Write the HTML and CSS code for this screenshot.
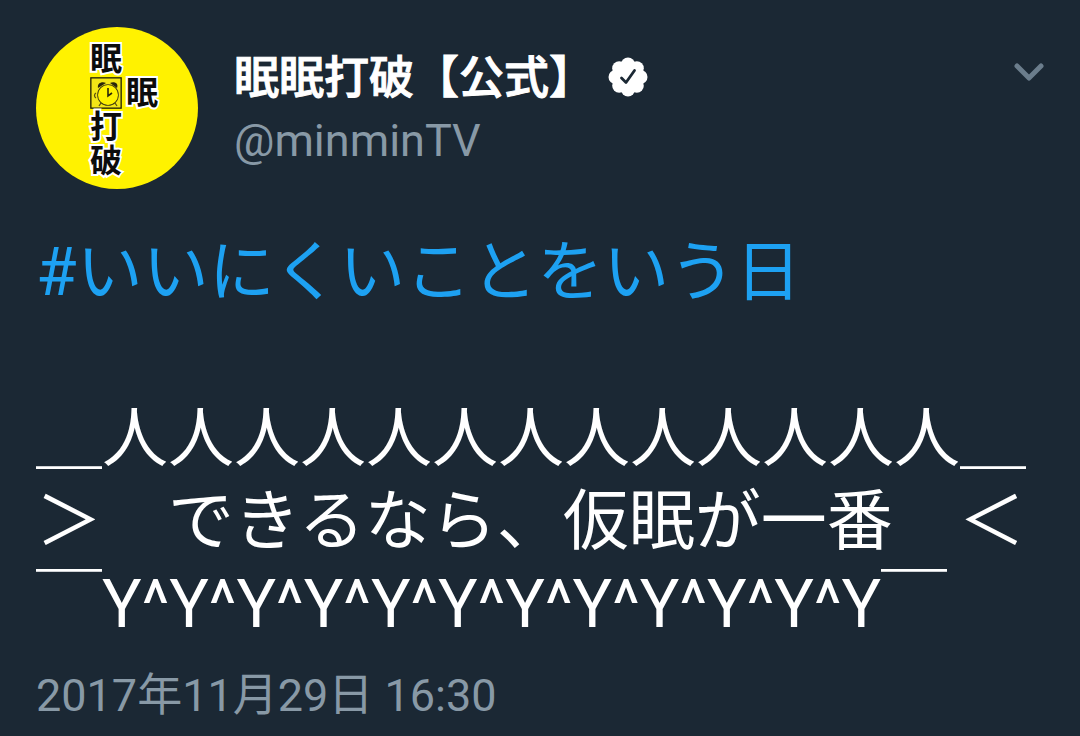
FILE: index.html
```html
<!DOCTYPE html>
<html lang="ja">
<head>
    <meta charset="UTF-8">
    <meta name="viewport" content="width=device-width, initial-scale=1.0">
    <title>眠眠打破【公式】</title>
    <link rel="stylesheet" href="styles.css">
</head>
<body>
    <article class="tweet">
        <header class="tweet-header">
            <div class="avatar">
                <span class="first-col">眠</span>
                <svg class="clock first-col" viewBox="0 0 32 32" aria-hidden="true">
                    <rect x="1.500" y="1.500" width="29" height="29" fill="#f3e616" stroke="#1c1a08" stroke-width="2.600"/>
                    <path d="M8 11c-1-5 4-7 8-5zM20 6c4-2 9 0 7 5z" fill="#2a260c"/>
                    <circle cx="18" cy="18" r="10" fill="#fff200" stroke="#3a3410" stroke-width="1.600"/>
                    <path d="M18 11v8l4-3" fill="none" stroke="#2a260c" stroke-width="1.600"/>
                    <path d="M11 26l-2 3M25 26l2 3M6 16c-2 1-2 4 0 5" fill="none" stroke="#5a5010" stroke-width="1.300"/>
                </svg>
                <span>眠</span>
                <span class="first-col">打</span>
                <span class="first-col">破</span>
            </div>
            <div class="user">
                <div class="name-row">
                    <span class="name">眠眠打破【公式】</span>
                    <svg class="verified" viewBox="0 0 40 40" role="img" aria-label="認証済み">
                        <g fill="#fff">
                            <circle cx="20" cy="20" r="15"/>
                            <circle cx="20" cy="7.500" r="7"/>
                            <circle cx="28.800" cy="11.200" r="7"/>
                            <circle cx="32.500" cy="20" r="7"/>
                            <circle cx="28.800" cy="28.800" r="7"/>
                            <circle cx="20" cy="32.500" r="7"/>
                            <circle cx="11.200" cy="28.800" r="7"/>
                            <circle cx="7.500" cy="20" r="7"/>
                            <circle cx="11.200" cy="11.200" r="7"/>
                        </g>
                        <path d="M13.500 21l4.500 4.500L26.500 13.500" fill="none" stroke="#1b2834" stroke-width="2.800" stroke-linecap="round" stroke-linejoin="round"/>
                    </svg>
                </div>
                <span class="handle">@minminTV</span>
            </div>
            <button class="menu" type="button" aria-label="メニュー">
                <svg viewBox="0 0 32 20" width="32" height="20">
                    <path d="M4 4l12 12L28 4" fill="none" stroke="#6b7d8c" stroke-width="5" stroke-linecap="round" stroke-linejoin="round"/>
                </svg>
            </button>
        </header>
        <p class="text"><a class="hashtag" href="#">#いいにくいことをいう日</a>

＿人人人人人人人人人人人人人＿
＞　できるなら、仮眠が一番　＜
￣Y^Y^Y^Y^Y^Y^Y^Y^Y^Y^Y^Y￣</p>
        <time class="date" datetime="2017-11-29T16:30">2017年11月29日 16:30</time>
    </article>
</body>
</html>
```

FILE: styles.css
```css
body {
    margin: 0;
    background-color: #1b2834;
    color: #fff;
    font-family: Roboto, "Noto Sans CJK JP", sans-serif;
}
.tweet {
    padding: 27px 35px 0 36px;
}
.tweet-header {
    display: flex;
    align-items: flex-start;
}
.avatar {
    display: grid;
    grid-template-columns: 32px 32px;
    grid-auto-rows: 34px;
    column-gap: 4px;
    align-content: center;
    align-items: center;
    justify-items: center;
    box-sizing: border-box;
    width: 162px;
    height: 162px;
    padding: 3px 0 0 54px;
    border-radius: 50%;
    background-color: #fff200;
    color: #0c0c0c;
    font-size: 32px;
    font-weight: 700;
    line-height: 34px;
    -webkit-text-stroke: 4px #fff;
    paint-order: stroke fill;
}
.first-col {
    grid-column: 1;
}
.clock {
    width: 32px;
    height: 32px;
}
.user {
    flex: 1;
    padding: 20px 0 0 36px;
}
.name-row {
    display: flex;
    align-items: flex-start;
    gap: 14px;
}
.name {
    font-size: 45px;
    font-weight: 500;
    line-height: 64px;
    -webkit-text-stroke: 1px #fff;
}
.verified {
    width: 40px;
    height: 40px;
    margin-top: 10px;
}
.handle {
    display: block;
    color: #8899a6;
    font-size: 45px;
    line-height: 60px;
}
.menu {
    display: flex;
    margin-top: 35px;
    padding: 0;
    border: none;
    background: none;
    cursor: pointer;
}
.text {
    margin: 42px 0 0;
    font-size: 66px;
    line-height: 83px;
    white-space: pre;
}
.hashtag {
    color: #1da1f2;
    text-decoration: none;
}
.date {
    display: block;
    margin-top: 20px;
    color: #8899a6;
    font-size: 45px;
    line-height: 60px;
}
```
